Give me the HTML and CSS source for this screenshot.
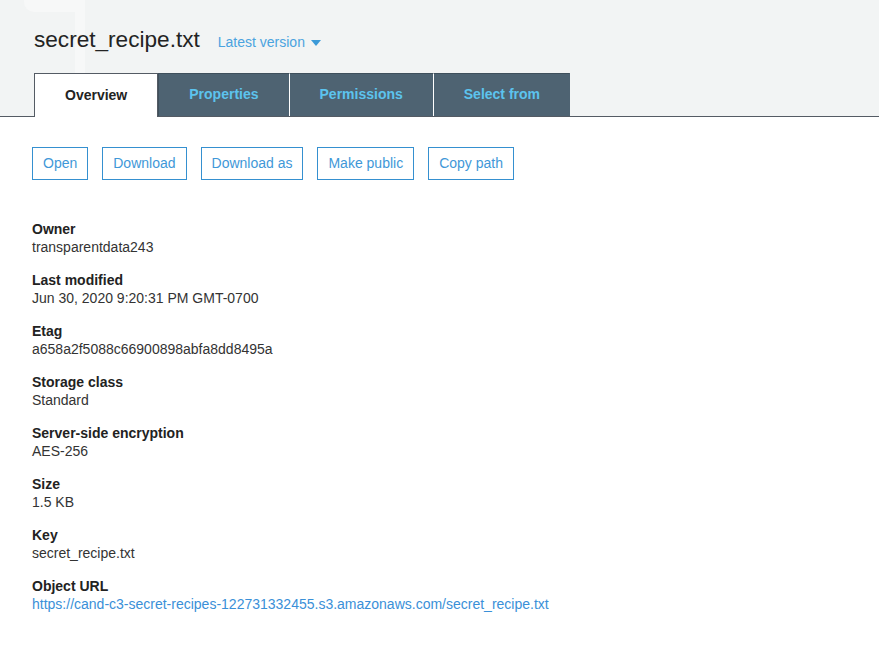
FILE: index.html
```html
<!DOCTYPE html>
<html lang="en">
<head>
<meta charset="utf-8">
<title>secret_recipe.txt</title>
<link rel="stylesheet" href="styles.css">
</head>
<body>
<header class="header">
  <div class="ghost ghost-top"></div>
  <div class="ghost ghost-bar"></div>
  <div class="title-row">
    <h1 class="title">secret_recipe.txt</h1>
    <span class="version">Latest version
      <svg class="caret" width="10" height="6" viewBox="0 0 10 6"><path d="M0 0 H10 L5 6 Z" fill="#3c9ad8"/></svg>
    </span>
  </div>
  <nav class="tabs">
    <div class="tab active">Overview</div>
    <div class="tab">Properties</div>
    <div class="tab">Permissions</div>
    <div class="tab">Select from</div>
  </nav>
</header>
<main class="content">
  <div class="actions">
    <button class="btn">Open</button>
    <button class="btn">Download</button>
    <button class="btn">Download as</button>
    <button class="btn">Make public</button>
    <button class="btn">Copy path</button>
  </div>
  <dl class="details">
    <div class="item"><dt>Owner</dt><dd>transparentdata243</dd></div>
    <div class="item"><dt>Last modified</dt><dd>Jun 30, 2020 9:20:31 PM GMT-0700</dd></div>
    <div class="item"><dt>Etag</dt><dd>a658a2f5088c66900898abfa8dd8495a</dd></div>
    <div class="item"><dt>Storage class</dt><dd>Standard</dd></div>
    <div class="item"><dt>Server-side encryption</dt><dd>AES-256</dd></div>
    <div class="item"><dt>Size</dt><dd>1.5 KB</dd></div>
    <div class="item"><dt>Key</dt><dd>secret_recipe.txt</dd></div>
    <div class="item"><dt>Object URL</dt><dd><a class="link" href="#">https://cand-c3-secret-recipes-122731332455.s3.amazonaws.com/secret_recipe.txt</a></dd></div>
  </dl>
</main>
</body>
</html>
```

FILE: styles.css
```css
* { box-sizing: border-box; }
html, body { margin: 0; padding: 0; background: #ffffff; }
body {
  font-family: "Liberation Sans", Arial, sans-serif;
  font-size: 14px;
  color: #333333;
}
.header {
  position: relative;
  background: #f2f4f4;
  border-bottom: 1px solid #545b64;
  padding: 26px 0 0 34px;
  height: 117px;
}
.ghost { position: absolute; background: #f7f8f8; }
.ghost-top { left: 24px; top: 0; width: 61px; height: 12px; border-bottom-left-radius: 10px; }
.ghost-bar { left: 75px; top: 0; width: 10px; height: 73px; }
.title-row {
  position: relative;
  display: flex;
  align-items: baseline;
  height: 28px;
}
.title {
  margin: 0;
  font-size: 22.6px;
  font-weight: normal;
  line-height: 27px;
  color: #232323;
}
.version {
  margin-left: 18px;
  font-size: 14px;
  color: #4aa3df;
  display: inline-flex;
  align-items: center;
}
.caret { margin-left: 6px; position: relative; top: 1px; }
.tabs {
  position: relative;
  display: flex;
  margin-top: 19px;
  height: 43px;
}
.tab {
  height: 43px;
  padding: 0 30px 2px;
  display: flex;
  align-items: center;
  justify-content: center;
  font-weight: bold;
  font-size: 14px;
  color: #5cc3ee;
  background: #4e6372;
  border-top: 1px solid #3f505c;
  border-right: 1px solid #ffffff;
}
.tab:nth-child(2) { border-left: 1px solid #3f505c; }
.tab:last-child { border-right: 1px solid #4e6372; padding-right: 29px; }
.tab.active {
  height: 44px;
  margin-bottom: -1px;
  background: #ffffff;
  color: #232323;
  border: 1px solid #545b64;
  border-bottom: none;
  padding-top: 0;
}
.content { padding: 30px 0 0 32px; }
.actions { display: flex; gap: 14px; }
.btn {
  height: 33px;
  padding: 0 10px;
  border: 1px solid #3590d0;
  background: #ffffff;
  color: #3f98d8;
  font-family: "Liberation Sans", Arial, sans-serif;
  font-size: 14px;
  line-height: 31px;
  margin: 0;
}
.details { margin: 41px 0 0 0; }
.item { margin-bottom: 17px; line-height: 17px; }
.item dt { font-weight: bold; color: #222222; }
.item dd { margin: 0; color: #333333; padding-top: 1px; margin-bottom: -1px; }
.link { color: #3a90d8; text-decoration: none; }
```
